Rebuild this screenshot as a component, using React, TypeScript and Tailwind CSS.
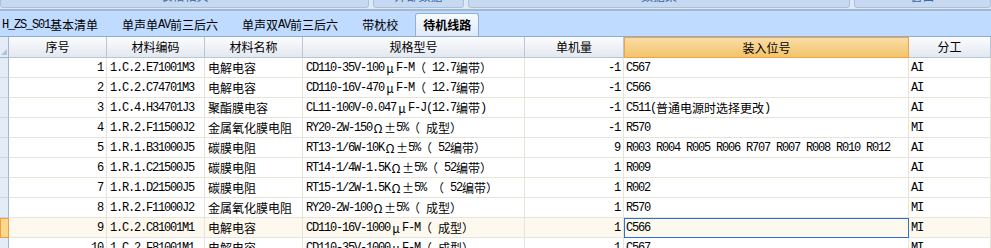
import React from "react";

type Row = {
  no: number;
  code: string;
  name: string;
  spec: string;
  qty: string;
  pos: string;
  work: string;
};

const rows: Row[] = [
  { no: 1, code: "1.C.2.E71001M3", name: "电解电容", spec: "CD110-35V-100μF-M（ 12.7编带）", qty: "-1", pos: "C567", work: "AI" },
  { no: 2, code: "1.C.2.C74701M3", name: "电解电容", spec: "CD110-16V-470μF-M（ 12.7编带）", qty: "-1", pos: "C566", work: "AI" },
  { no: 3, code: "1.C.4.H34701J3", name: "聚酯膜电容", spec: "CL11-100V-0.047μF-J(12.7编带)", qty: "-1", pos: "C511(普通电源时选择更改)", work: "AI" },
  { no: 4, code: "1.R.2.F11500J2", name: "金属氧化膜电阻", spec: "RY20-2W-150Ω±5%（ 成型）", qty: "-1", pos: "R570", work: "MI" },
  { no: 5, code: "1.R.1.B31000J5", name: "碳膜电阻", spec: "RT13-1/6W-10KΩ±5%（ 52编带）", qty: "9", pos: "R003 R004 R005 R006 R707 R007 R008 R010 R012", work: "AI" },
  { no: 6, code: "1.R.1.C21500J5", name: "碳膜电阻", spec: "RT14-1/4W-1.5KΩ±5%（ 52编带）", qty: "1", pos: "R009", work: "AI" },
  { no: 7, code: "1.R.1.D21500J5", name: "碳膜电阻", spec: "RT15-1/2W-1.5KΩ±5% （ 52编带）", qty: "1", pos: "R002", work: "AI" },
  { no: 8, code: "1.R.2.F11000J2", name: "金属氧化膜电阻", spec: "RY20-2W-100Ω±5%（ 成型）", qty: "1", pos: "R570", work: "MI" },
  { no: 9, code: "1.C.2.C81001M1", name: "电解电容", spec: "CD110-16V-1000μF-M（ 成型）", qty: "1", pos: "C566", work: "MI" },
  { no: 10, code: "1.C.2.F81001M1", name: "电解电容", spec: "CD110-35V-1000μF-M（ 成型）", qty: "1", pos: "C567", work: "MI" },
];

const cols = "grid grid-cols-[9px_98px_98px_98px_222px_99px_285px_1fr]";

// ascii runs get a narrow mono face, greek/± get a full-width box, the rest falls to the CJK font
function Mixed({ text }: { text: string }) {
  const parts = text.split(/([\x20-\x7e]+|[μΩ±])/).filter(Boolean);
  return (
    <>
      {parts.map((p, i) => {
        if (/^[\x20-\x7e]+$/.test(p))
          return (
            <span key={i} className="font-['Liberation_Mono'] tracking-[-1.2px] whitespace-pre">
              {p}
            </span>
          );
        if (/^[μΩ±]$/.test(p))
          return (
            <span key={i} className="inline-block w-[12px] text-center">
              {p}
            </span>
          );
        return <span key={i}>{p}</span>;
      })}
    </>
  );
}

function TopButton({ label, className }: { label: string; className: string }) {
  return (
    <div className={`h-[24px] -mt-[16px] flex items-center justify-center rounded-b-[3px] border border-[#a9c0dc] bg-[#c6d9f0] text-[12px] text-[#3a68a8] ${className}`}>
      {label}
    </div>
  );
}

function Tab({ label, active }: { label: string; active?: boolean }) {
  if (active) {
    return (
      <div className="h-[23px] ml-[17px] px-[7px] flex items-center rounded-t-[3px] border border-b-0 border-[#92b1d8] bg-gradient-to-b from-[#f7faff] to-[#dfe9f6] text-[12px] font-bold text-black">
        <Mixed text={label} />
      </div>
    );
  }
  return (
    <div className="h-[23px] ml-[24px] first:ml-[2px] flex items-center text-[12px] text-black">
      <Mixed text={label} />
    </div>
  );
}

function HeadCell({ label, hot }: { label: string; hot?: boolean }) {
  return (
    <div
      className={
        hot
          ? "flex items-center justify-center border border-[#f0a445] bg-gradient-to-b from-[#f9dca6] to-[#f3c468] text-[12px]"
          : "flex items-center justify-center border-r border-b border-[#b9c6d8] bg-gradient-to-b from-[#fbfcfd] to-[#e3e8f0] text-[12px]"
      }
    >
      {label}
    </div>
  );
}

export default function App() {
  return (
    <div className="w-[991px] h-[248px] overflow-hidden bg-white font-['Noto_Sans_CJK_SC',sans-serif] text-black">
      {/* ribbon buttons, only their bottom edge shows */}
      <div className="h-[9px] flex gap-[4px] overflow-hidden bg-[#dde8f5]">
        <TopButton label="表格相关" className="w-[369px]" />
        <TopButton label="外部数据" className="w-[91px]" />
        <TopButton label="数据集" className="w-[382px]" />
        <TopButton label="窗口" className="flex-1" />
      </div>
      <div className="h-[2px] bg-[#a3b7cf]" />

      {/* sheet tabs */}
      <div className="h-[26px] flex items-end border-b border-[#8eabd2] bg-[#bfdbff] overflow-hidden">
        <Tab label="H_ZS_S01基本清单" />
        <Tab label="单声单AV前三后六" />
        <Tab label="单声双AV前三后六" />
        <Tab label="带枕校" />
        <Tab label="待机线路" active />
      </div>

      {/* grid header */}
      <div className={`${cols} h-[21px]`}>
        <div className="relative border-r border-b border-[#9fb6d3] bg-[#e4ecf7]">
          <svg className="absolute right-[1px] bottom-[2px]" width="6" height="6" viewBox="0 0 6 6">
            <path d="M6 0 L6 6 L0 6 Z" fill="#b4c2d4" />
          </svg>
        </div>
        <HeadCell label="序号" />
        <HeadCell label="材料编码" />
        <HeadCell label="材料名称" />
        <HeadCell label="规格型号" />
        <HeadCell label="单机量" />
        <HeadCell label="装入位号" hot />
        <HeadCell label="分工" />
      </div>

      {/* rows */}
      {rows.map((r) => {
        const sel = r.no === 9;
        const cell = `flex items-center h-[20px] border-r border-b border-[#e7e4da] text-[12px] whitespace-nowrap overflow-hidden ${sel ? "bg-[#fdf9ee]" : "bg-white"}`;
        return (
          <div key={r.no} className={cols}>
            <div
              className={
                sel
                  ? "h-[20px] border border-[#f0a040] bg-[#fdd690]"
                  : "h-[20px] border-r border-b border-r-[#9fb6d3] border-b-[#c9d6e8] bg-[#e4ecf7]"
              }
            />
            <div className={`${cell} justify-end pr-[3px]`}>
              <Mixed text={String(r.no)} />
            </div>
            <div className={`${cell} pl-[3px]`}>
              <Mixed text={r.code} />
            </div>
            <div className={`${cell} pl-[3px]`}>
              <Mixed text={r.name} />
            </div>
            <div className={`${cell} pl-[3px]`}>
              <Mixed text={r.spec} />
            </div>
            <div className={`${cell} justify-end pr-[3px]`}>
              <Mixed text={r.qty} />
            </div>
            <div className={`${cell} pl-[2px] ${sel ? "outline outline-1 -outline-offset-1 outline-[#2f6fd1]" : ""}`}>
              <Mixed text={r.pos} />
            </div>
            <div className={`${cell} pl-[2px]`}>
              <Mixed text={r.work} />
            </div>
          </div>
        );
      })}
    </div>
  );
}
